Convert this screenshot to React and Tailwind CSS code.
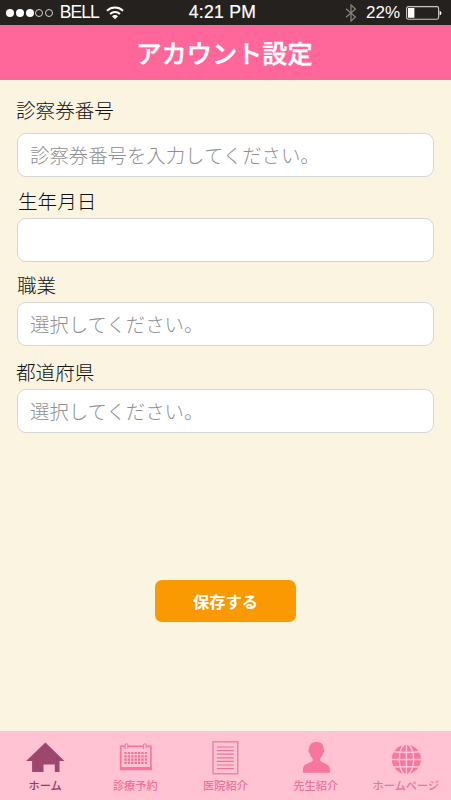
const fields = [
    { label: '診察券番号', placeholder: '診察券番号を入力してください。', wrap: 'pt-[16px]', labelBox: 'h-[37px] pl-0 leading-[27px]' },
    { label: '生年月日', placeholder: '', wrap: 'pt-[10px]', labelBox: 'h-[31px] pl-[2px] leading-[27px]' },
    { label: '職業', placeholder: '選択してください。', wrap: 'pt-[9px]', labelBox: 'h-[31px] pl-px leading-[27px]' },
    { label: '都道府県', placeholder: '選択してください。', wrap: 'pt-[12px]', labelBox: 'h-[31px] pl-0 leading-[27px]' },
];

const WifiIcon = () => (
    <svg className="h-[14px] w-[18px]" viewBox="0 0 18 14" fill="none" stroke="#fff" strokeWidth="2">
        <path d="M1 4.7a11.6 11.6 0 0 1 16 0" />
        <path d="M4.1 7.9a7.2 7.2 0 0 1 9.8 0" />
        <path d="M9 13.2 6 10.2a4.2 4.2 0 0 1 6 0Z" fill="#fff" stroke="none" />
    </svg>
);

const BluetoothIcon = () => (
    <svg className="h-[18px] w-[12px]" viewBox="0 0 12 18" fill="none" stroke="#85817e" strokeWidth="1.3">
        <path d="M1 4.8 10.4 13 6 17V1l4.4 4L1 13.2" />
    </svg>
);

const BatteryIcon = () => (
    <svg className="h-[14px] w-[36px]" viewBox="0 0 36 14">
        <rect x="0.6" y="0.6" width="32" height="12.6" rx="1.6" fill="none" stroke="#c9c6c4" strokeWidth="1.1" />
        <rect x="2" y="2" width="6.4" height="9.8" fill="#fff" />
        <path d="M33.6 4.7c2.4.8 2.4 3.8 0 4.6Z" fill="#fff" />
    </svg>
);

const HomeIcon = () => (
    <svg className="h-[34px] w-[40px]" viewBox="0 0 40 34" fill="#9d476f">
        <path d="M20.4 1.6 39.5 20H34.5V31H29.8V23.4H18.5V31H7.1V20H1.1Z" />
    </svg>
);

const CalendarIcon = () => (
    <svg className="h-[34px] w-[34px]" viewBox="0 0 34 34">
        <rect x="2.7" y="5.3" width="30.2" height="22.7" fill="none" stroke="#f478a2" strokeWidth="1.7" />
        <path d="M1.9 27.6H33.7" stroke="#f478a2" strokeWidth="3.4" />
        <path d="M7.2 8V4.1a1.3 1.3 0 0 1 2.6 0V7.5M25.5 8V4.1a1.3 1.3 0 0 1 2.6 0V7.5" fill="#ffc3d3" stroke="#f478a2" strokeWidth="1.1" />
        <path
            d="M6.4 12H28.8M6.4 15.3H28.8M6.4 18.6H28.8M6.4 21.9H28.8"
            fill="none"
            stroke="#f06e98"
            strokeWidth="2.2"
            strokeDasharray="2.2 1.2"
        />
    </svg>
);

const DocumentIcon = () => (
    <svg className="h-[34px] w-[28px]" viewBox="0 0 28 34" fill="none" stroke="#e8759b">
        <rect x="2" y="0.8" width="24.8" height="32" strokeWidth="1.2" />
        <path d="M5.8 6H22.8M5.8 9.6H22.8M5.8 13.2H22.8M5.8 16.8H22.8M5.8 20.4H22.8M5.8 24H22.8M5.8 27.6H22.8" strokeWidth="1.2" />
    </svg>
);

const DoctorIcon = () => (
    <svg className="h-[34px] w-[30px]" viewBox="0 0 30 34" fill="#f7759f">
        <path d="M15.4 1C10.7 1 8 3.7 8.2 8C7 8.5 7.3 11.2 8.7 12C9 14.5 10.5 16.2 11.7 17.4V19.8C8.8 22.4 2.9 22.8 2.2 26.5C1.9 28 1.9 30.5 1.9 31.8H28.9C28.9 30.5 28.9 28 28.6 26.5C27.9 22.8 22 22.4 19.1 19.8V17.4C20.3 16.2 21.8 14.5 22.1 12C23.5 11.2 23.8 8.5 22.6 8C22.8 3.7 20.1 1 15.4 1Z" />
    </svg>
);

const GlobeIcon = () => (
    <svg className="h-[34px] w-[32px]" viewBox="0 0 32 34">
        <circle cx="16.4" cy="18.4" r="14.6" fill="#f478a2" />
        <g fill="none" stroke="#ffc3d3" strokeWidth="1.5">
            <path d="M16.4 3V34M1 18.4H32M3.5 10.8Q16.4 12 29.3 10.8M3.5 26Q16.4 24.8 29.3 26" />
            <ellipse cx="16.4" cy="18.4" rx="7.2" ry="15.4" />
        </g>
    </svg>
);

const tabs = [
    { label: 'ホーム', Icon: HomeIcon, color: 'text-[#913f61]' },
    { label: '診療予約', Icon: CalendarIcon, color: 'text-[#f0709a]' },
    { label: '医院紹介', Icon: DocumentIcon, color: 'text-[#e8759b]' },
    { label: '先生紹介', Icon: DoctorIcon, color: 'text-[#e8759b]' },
    { label: 'ホームページ', Icon: GlobeIcon, color: 'text-[#e8759b]' },
];

const StatusBar = () => (
    <div className="grid h-[25px] shrink-0 grid-cols-[1fr_auto_1fr] items-center bg-[#25211e] pr-[9px] pl-[6px] font-['Liberation_Sans',sans-serif] leading-none text-white">
        <div className="flex items-center">
            <div className="flex gap-[1.8px]">
                <span className="size-[8px] rounded-full bg-white" />
                <span className="size-[8px] rounded-full bg-white" />
                <span className="size-[8px] rounded-full bg-white" />
                <span className="size-[8px] rounded-full border border-[#d5d2d0]" />
                <span className="size-[8px] rounded-full border border-[#d5d2d0]" />
            </div>
            <span className="mr-[5px] ml-[6.5px] w-[41px] text-[17.5px] tracking-[-0.9px]">BELL</span>
            <WifiIcon />
        </div>
        <span className="mr-[3px] text-[17.6px] tracking-[0.3px] [-webkit-text-stroke:0.2px_#fff]">4:21 PM</span>
        <div className="flex items-center justify-end">
            <BluetoothIcon />
            <span className="mr-[6px] ml-[9px] text-[17px]">22%</span>
            <BatteryIcon />
        </div>
    </div>
);

const Field = ({ label, placeholder, wrap, labelBox }) => (
    <label className={`block ${wrap}`}>
        <span className={`block text-[19.6px] font-light text-[#111] ${labelBox}`}>{label}</span>
        <input
            type="text"
            placeholder={placeholder}
            className="ml-px block h-[44px] w-[417px] rounded-[9px] border border-[#d6d7d4] bg-white px-[12px] pb-[2px] text-[19.4px] font-light outline-none placeholder:text-[#8f8f8f] placeholder:opacity-100"
        />
    </label>
);

export default function App() {
    return (
        <div className="flex h-[800px] w-[451px] flex-col overflow-hidden bg-[#faf4e0] font-['Noto_Sans_CJK_JP',sans-serif]">
            <StatusBar />
            <header className="flex h-[55px] shrink-0 items-center justify-center bg-[#ff6699]">
                <h1 className="mr-[2px] text-[25.2px] leading-none font-medium text-white [-webkit-text-stroke:0.4px_#fff]">
                    アカウント設定
                </h1>
            </header>
            <main className="flex flex-1 flex-col px-[16px]">
                {fields.map((field) => (
                    <Field key={field.label} {...field} />
                ))}
                <button className="mt-[147px] h-[42px] w-[141px] self-center rounded-[7px] bg-[#fb9902] text-[16.3px] font-bold text-white">
                    保存する
                </button>
            </main>
            <nav className="grid h-[69px] shrink-0 grid-cols-5 bg-[#ffc3d3]">
                {tabs.map(({ label, Icon, color }) => (
                    <a key={label} className={`flex flex-col items-center pt-[10px] ${color}`}>
                        <Icon />
                        <span className="mt-[3px] text-[11.2px] leading-[14px] font-medium whitespace-nowrap">{label}</span>
                    </a>
                ))}
            </nav>
        </div>
    );
}
